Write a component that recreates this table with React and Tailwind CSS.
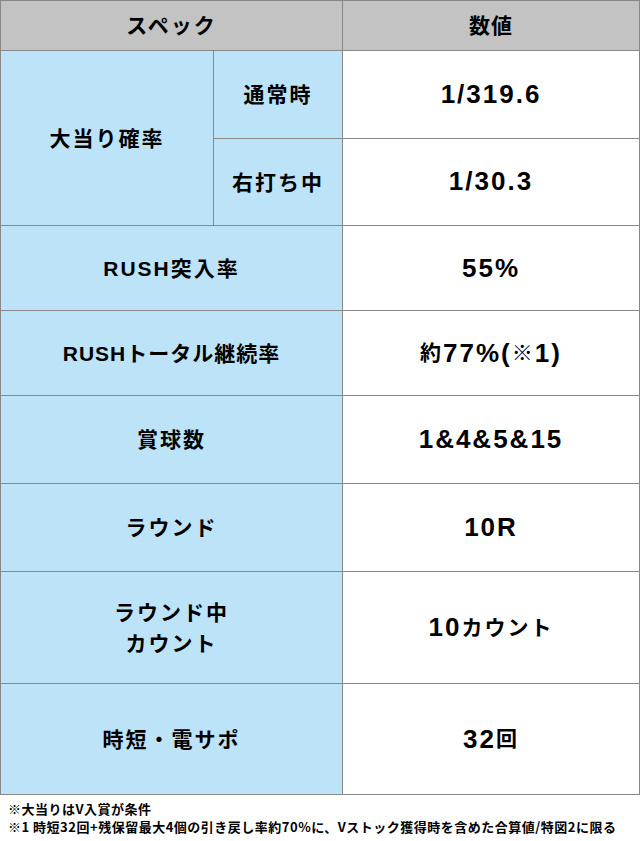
export default function App() {
  const font = { fontFamily: '"Liberation Sans", "Noto Sans CJK JP", "Noto Sans", sans-serif' };
  const label = "flex items-center justify-center bg-[#bce3f7] text-[21px] font-bold text-black leading-[31px] text-center";
  const value = "flex-1 flex items-center justify-center bg-white text-[26px] font-bold text-black tracking-[2px]";
  const J = ({ children }) => <span className="text-[21px]">{children}</span>;
  const rows = [
    { l: "RUSH突入率", t: "tracking-[2px]", v: "55%", h: "h-[85px]" },
    { l: "RUSHトータル継続率", t: "tracking-[1px]", v: <><J>約</J>77%(<J>※</J>1)</>, h: "h-[85px]" },
    { l: "賞球数", t: "tracking-[2px]", v: "1&4&5&15", h: "h-[88px]" },
    { l: "ラウンド", t: "tracking-[2px]", v: "10R", h: "h-[88px]" },
    { l: <>ラウンド中<br />カウント</>, t: "tracking-[2px]", v: <>10<J>カウント</J></>, h: "h-[112px]" },
    { l: "時短・電サポ", t: "tracking-[2px]", v: <>32<J>回</J></>, h: "h-[111px]" },
  ];
  return (
    <div className="w-[640px] h-[841px] bg-white" style={font}>
      <div className="w-[640px] border-t border-l border-r border-[#888]">
        <div className="flex h-[50px] border-b border-[#888] bg-[#c3c3c3]">
          <div className="w-[342px] border-r border-[#888] flex items-center justify-center text-[21px] font-bold tracking-[2px]">スペック</div>
          <div className="flex-1 flex items-center justify-center text-[21px] font-bold tracking-[1px]">数値</div>
        </div>
        <div className="flex h-[175px] border-b border-[#888]">
          <div className={`w-[213px] border-r border-[#888] tracking-[2px] ${label}`}>大当り確率</div>
          <div className="w-[129px] border-r border-[#888] flex flex-col">
            <div className={`h-[88px] border-b border-[#888] tracking-[2px] ${label}`}>通常時</div>
            <div className={`flex-1 tracking-[2px] ${label}`}>右打ち中</div>
          </div>
          <div className="flex-1 flex flex-col">
            <div className={`h-[88px] border-b border-[#888] ${value}`}>1/319.6</div>
            <div className={value}>1/30.3</div>
          </div>
        </div>
        {rows.map((r, i) => (
          <div key={i} className={`flex ${r.h} border-b border-[#888]`}>
            <div className={`w-[342px] border-r border-[#888] ${r.t} ${label}`}>{r.l}</div>
            <div className={value}>{r.v}</div>
          </div>
        ))}
      </div>
      <div className="pl-[8px] pt-[5px] text-[13px] font-bold leading-[18px] tracking-[0.5px] text-black" style={{ fontFamily: '"Noto Sans CJK JP", sans-serif' }}>
        <div>※大当りはV入賞が条件</div>
        <div>※1 時短32回+残保留最大4個の引き戻し率約70%に、Vストック獲得時を含めた合算値/特図2に限る</div>
      </div>
    </div>
  );
}
